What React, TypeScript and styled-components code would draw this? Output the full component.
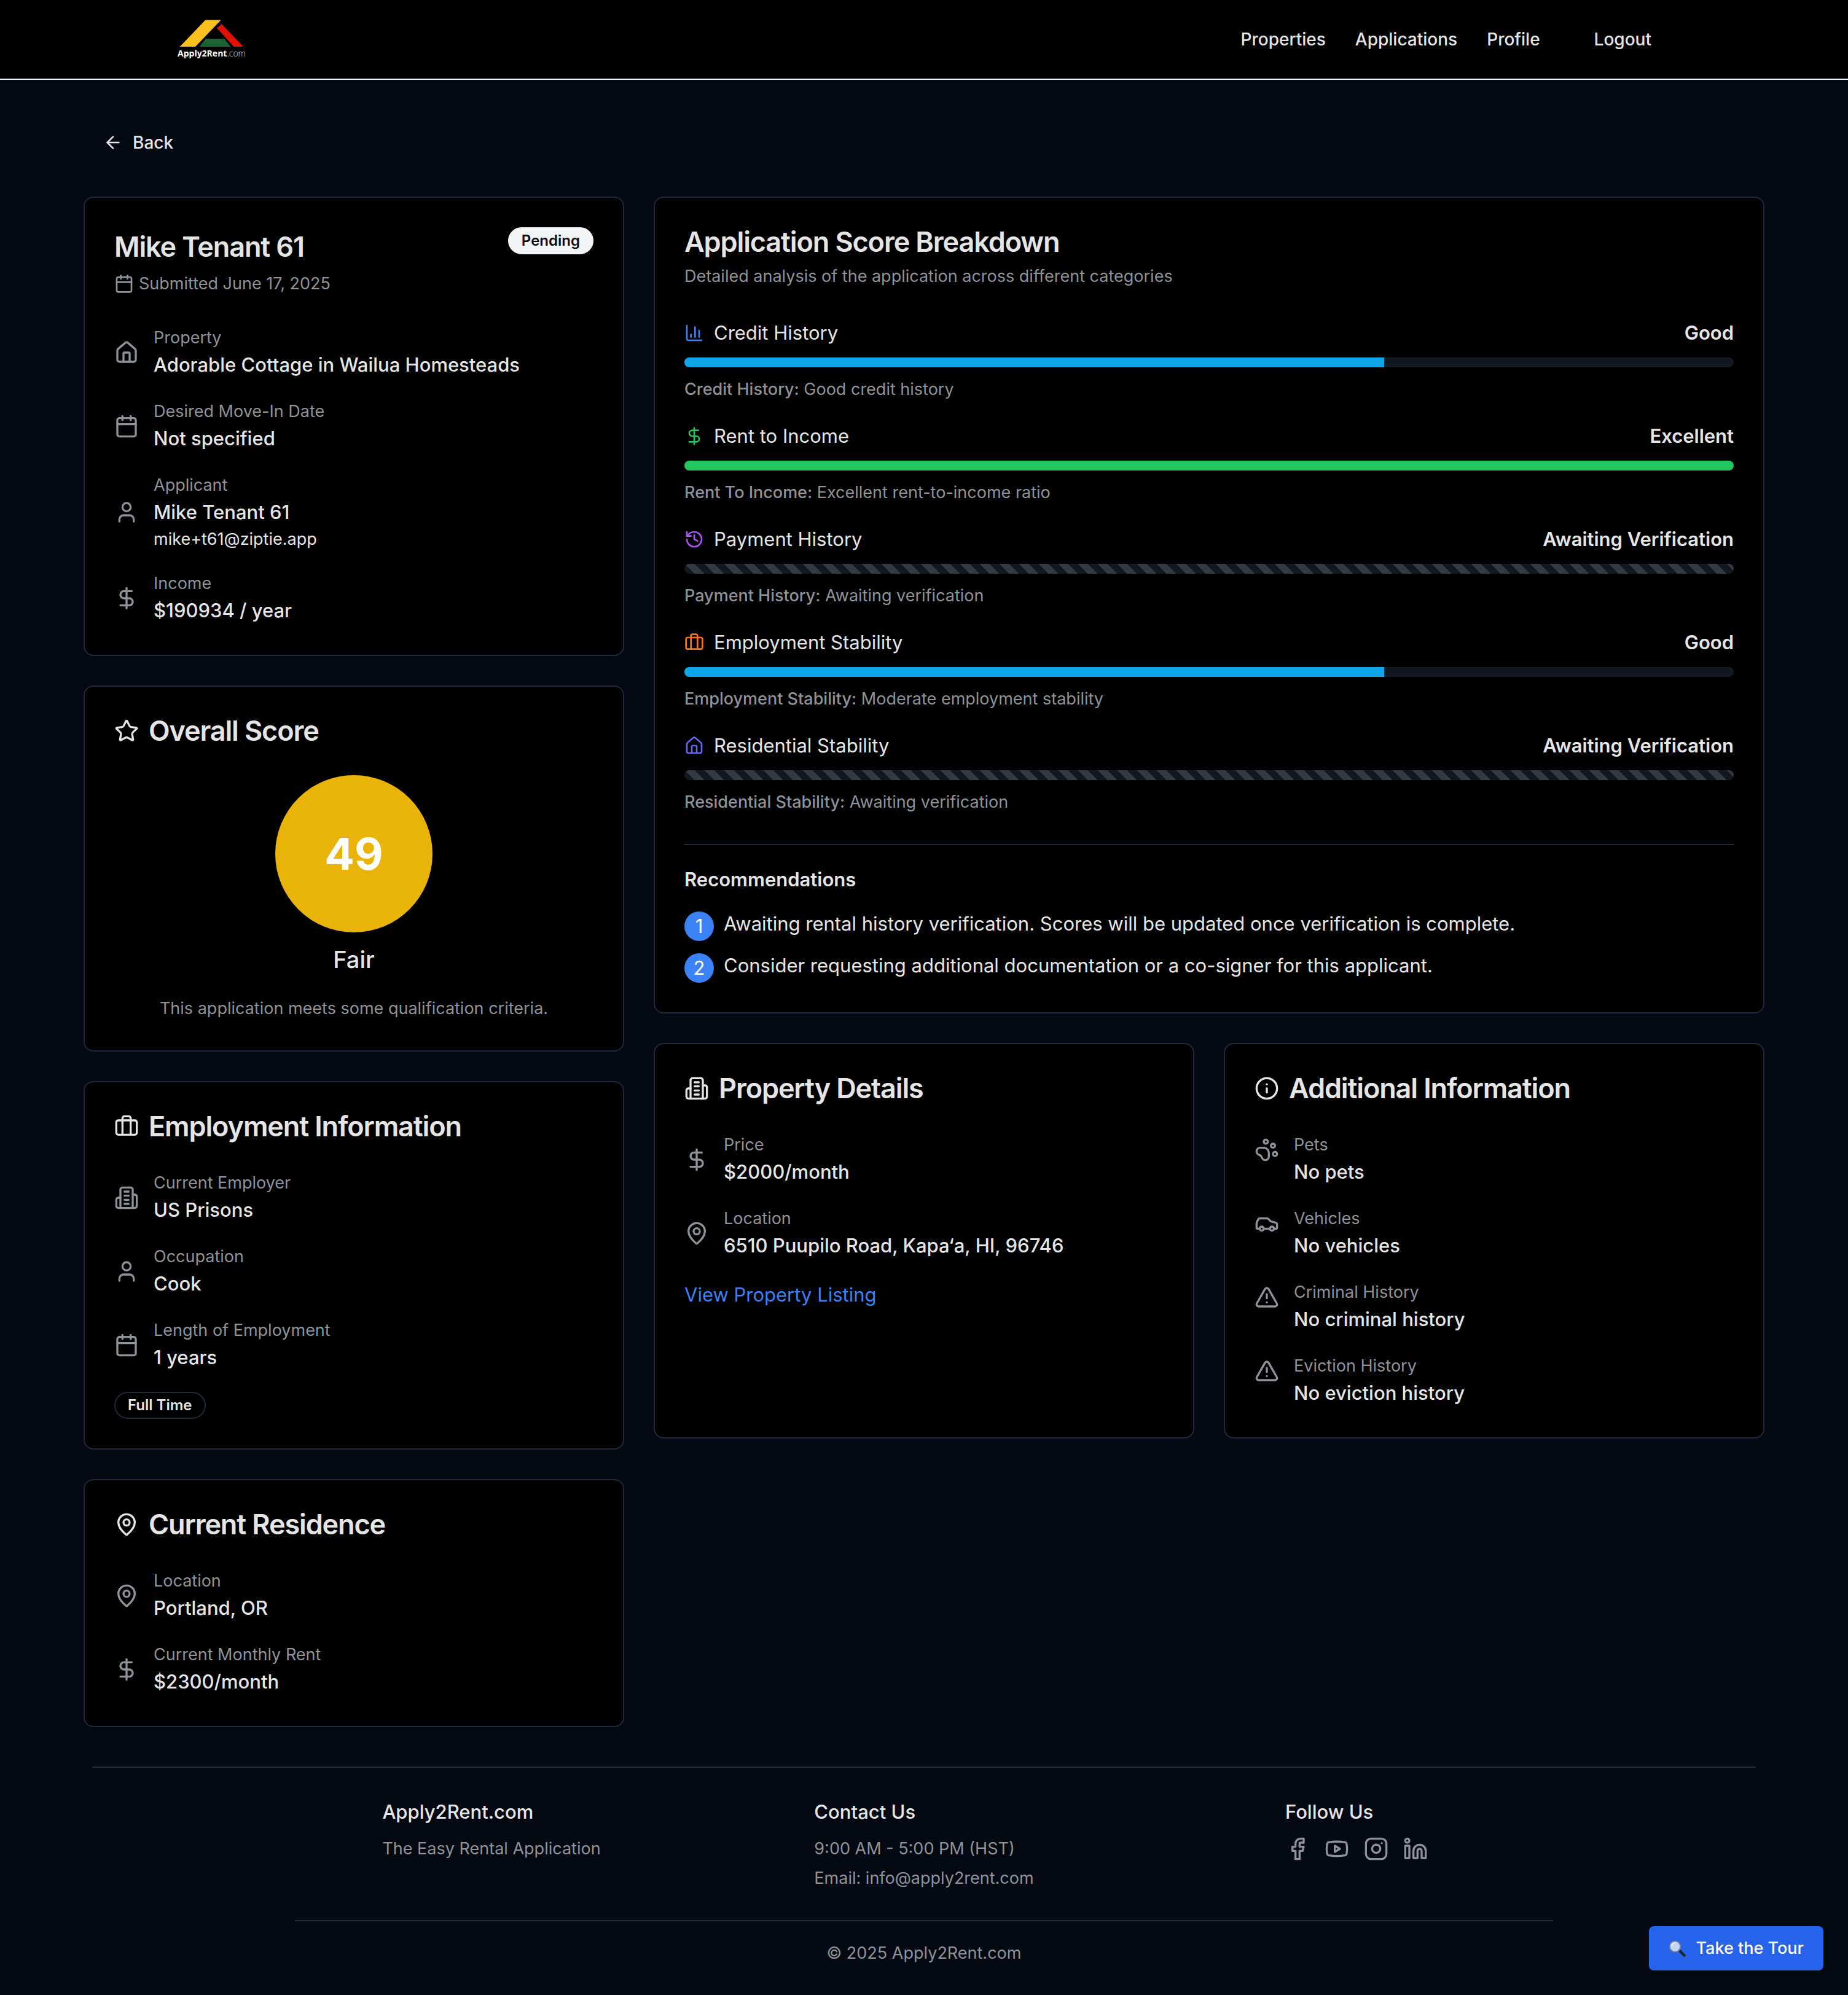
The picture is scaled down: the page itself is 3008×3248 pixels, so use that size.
import React from "react";
import styled, { createGlobalStyle } from "styled-components";
import {
  ArrowLeft,
  Briefcase,
  Calendar,
  Car,
  ChartColumn,
  DollarSign,
  Facebook,
  History,
  House,
  Info,
  Instagram,
  Linkedin,
  MapPin,
  PawPrint,
  Star,
  TriangleAlert,
  User,
  Youtube,
} from "lucide-react";

const color = {
  page: "#050a12",
  card: "#000000",
  border: "#1e293b",
  text: "#e5e5e5",
  muted: "#8f9299",
  track: "#111820",
  link: "#3b82f6",
};

const size = {
  title: "45px",
  rating: "38px",
  body: "31px",
  nav: "28px",
  small: "27px",
  badge: "24px",
};

const GlobalStyle = createGlobalStyle`
  *, *::before, *::after { box-sizing: border-box; }
  body {
    margin: 0;
    background: ${color.page};
    color: ${color.text};
    font-family: Inter, "Liberation Sans", sans-serif;
    font-size: ${size.body};
    line-height: 48px;
    -webkit-font-smoothing: antialiased;
  }
  h1, h2, h3, p, dl, dd, ol { margin: 0; padding: 0; }
  a { color: inherit; text-decoration: none; }
  button { font: inherit; color: inherit; background: none; border: 0; padding: 0; cursor: pointer; }
  svg { display: block; flex-shrink: 0; }
`;

type IconType = React.ComponentType<{ size?: number; color?: string; "aria-hidden"?: boolean }>;

/* Office block with four rows of windows */
function Building({ size: px = 24, color: stroke = "currentColor" }: { size?: number; color?: string }) {
  return (
    <svg
      width={px}
      height={px}
      viewBox="0 0 24 24"
      fill="none"
      stroke={stroke}
      strokeWidth="2"
      strokeLinecap="round"
      strokeLinejoin="round"
      aria-hidden
    >
      <path d="M6 22V4a2 2 0 0 1 2-2h8a2 2 0 0 1 2 2v18Z" />
      <path d="M6 12H4a2 2 0 0 0-2 2v6a2 2 0 0 0 2 2h2" />
      <path d="M18 9h2a2 2 0 0 1 2 2v9a2 2 0 0 1-2 2h-2" />
      <path d="M10 6h4" />
      <path d="M10 10h4" />
      <path d="M10 14h4" />
      <path d="M10 18h4" />
    </svg>
  );
}

/* Header */

const Header = styled.header`
  background: #000;
  border-bottom: 2px solid #f1f1f1;
`;

const HeaderInner = styled.div`
  display: flex;
  align-items: center;
  justify-content: space-between;
  height: 128px;
  max-width: 2560px;
  margin: 0 auto;
  padding: 0 64px;
`;

const Nav = styled.nav`
  display: flex;
  align-items: center;
  gap: 48px;
  font-size: ${size.nav};
  line-height: 40px;
  font-weight: 500;
`;

const LogoutButton = styled.button`
  margin-left: 8px;
  padding: 16px 32px;
  border-radius: 12px;
`;

function Logo() {
  return (
    <svg width="124" height="72" viewBox="288 28 124 72" role="img" aria-label="Apply2Rent.com">
      <path d="M334.4 32.5h25.3L318 76h-25.3z" fill="#fcc01e" />
      <path d="M361 39.3 396 76h-15.5L353 45.5z" fill="#e01000" />
      <path d="M335 62.9h30L375.3 76h-50.7z" fill="#1b6333" />
      <text x="289" y="92" fill="#fff" fontFamily="'Open Sans', sans-serif" fontSize="14" fontWeight="700">
        Apply2Rent<tspan fontWeight="300" fill="#ddd">.com</tspan>
      </text>
    </svg>
  );
}

/* Page frame */

const Main = styled.main`
  max-width: 2800px;
  margin: 0 auto;
  padding: 62px 32px 64px;
`;

const BackButton = styled.button`
  display: flex;
  align-items: center;
  gap: 16px;
  margin-bottom: 48px;
  padding: 20px 32px;
  font-size: ${size.nav};
  line-height: 40px;
  font-weight: 500;
`;

const Columns = styled.div`
  display: grid;
  grid-template-columns: repeat(3, minmax(0, 1fr));
  gap: 48px;
  align-items: start;
`;

const Stack = styled.div<{ $span?: number }>`
  display: flex;
  flex-direction: column;
  gap: 48px;
  grid-column: span ${(p) => p.$span ?? 1};
`;

const Pair = styled.div`
  display: grid;
  grid-template-columns: repeat(2, minmax(0, 1fr));
  gap: 48px;
`;

/* Cards */

const Card = styled.section`
  padding: 48px;
  background: ${color.card};
  border: 2px solid ${color.border};
  border-radius: 16px;
`;

const CardTitle = styled.h2`
  display: flex;
  align-items: center;
  gap: 16px;
  font-size: ${size.title};
  line-height: 48px;
  font-weight: 600;
  letter-spacing: -0.025em;
`;

const ApplicantName = styled.h1`
  font-size: ${size.title};
  line-height: 64px;
  font-weight: 600;
  letter-spacing: -0.025em;
`;

const CardTop = styled.div`
  display: flex;
  justify-content: space-between;
  align-items: flex-start;
`;

const Caption = styled.p<{ $gap: number }>`
  display: flex;
  align-items: center;
  gap: 8px;
  margin-top: ${(p) => p.$gap}px;
  font-size: ${size.small};
  line-height: 40px;
  color: ${color.muted};
`;

const Badge = styled.span<{ $solid?: boolean }>`
  display: inline-flex;
  padding: 4px 20px;
  border: 2px solid ${(p) => (p.$solid ? "#f3f4f6" : color.border)};
  border-radius: 22px;
  background: ${(p) => (p.$solid ? "#f3f4f6" : "transparent")};
  color: ${(p) => (p.$solid ? "#0a0a0a" : color.text)};
  font-size: ${size.badge};
  line-height: 32px;
  font-weight: 600;
`;

const BadgeRow = styled.div`
  display: flex;
  margin-top: 32px;
`;

/* Icon, label and value lines */

const FactList = styled.dl`
  display: flex;
  flex-direction: column;
  gap: 32px;
  margin-top: 48px;
`;

const FactRow = styled.div<{ $top?: boolean }>`
  display: flex;
  align-items: ${(p) => (p.$top ? "flex-start" : "center")};
  gap: 24px;

  > svg {
    color: ${color.muted};
    margin-top: ${(p) => (p.$top ? 8 : 0)}px;
  }
`;

const FactLabel = styled.dt`
  font-size: ${size.small};
  line-height: 40px;
  color: ${color.muted};
`;

const FactValue = styled.dd`
  font-weight: 500;
`;

const FactNote = styled.dd`
  font-size: ${size.small};
  line-height: 40px;
`;

type Fact = { icon: IconType; label: string; value: string; note?: string };

function Facts({ items, top }: { items: Fact[]; top?: boolean }) {
  return (
    <FactList>
      {items.map(({ icon: Icon, label, value, note }) => (
        <FactRow key={label} $top={top}>
          <Icon size={40} aria-hidden />
          <div>
            <FactLabel>{label}</FactLabel>
            <FactValue>{value}</FactValue>
            {note && <FactNote>{note}</FactNote>}
          </div>
        </FactRow>
      ))}
    </FactList>
  );
}

/* Overall score */

const ScoreBody = styled.div`
  display: flex;
  flex-direction: column;
  align-items: center;
  margin-top: 48px;
  text-align: center;
`;

const ScoreCircle = styled.div`
  display: grid;
  place-items: center;
  width: 256px;
  height: 256px;
  border-radius: 50%;
  background: #eab308;
  color: #fff;
  font-size: 72px;
  line-height: 80px;
  font-weight: 700;
`;

const ScoreRating = styled.p`
  margin-top: 16px;
  font-size: ${size.rating};
  line-height: 56px;
  font-weight: 500;
`;

/* Score breakdown */

const Scores = styled.div`
  display: flex;
  flex-direction: column;
  gap: 32px;
  margin-top: 48px;
`;

const ScoreRow = styled.div`
  display: flex;
  flex-direction: column;
  gap: 16px;
`;

const ScoreHead = styled.div`
  display: flex;
  justify-content: space-between;
  align-items: center;
`;

const ScoreName = styled.h3`
  display: flex;
  align-items: center;
  gap: 16px;
  font-size: ${size.body};
  font-weight: 400;
`;

const Rating = styled.span`
  font-weight: 600;
`;

const Track = styled.div<{ $pending: boolean }>`
  height: 16px;
  overflow: hidden;
  border-radius: 8px;
  background-color: ${color.track};
  background-size: 32px 32px;
  background-image: ${(p) =>
    p.$pending
      ? "linear-gradient(45deg, rgba(255,255,255,.15) 25%, transparent 25%, transparent 50%, rgba(255,255,255,.15) 50%, rgba(255,255,255,.15) 75%, transparent 75%)"
      : "none"};
`;

const Fill = styled.div<{ $color: string }>`
  height: 100%;
  background: ${(p) => p.$color};
`;

const ScoreNote = styled.p`
  font-size: ${size.small};
  line-height: 40px;
  color: ${color.muted};

  strong { font-weight: 500; }
`;

type Score = {
  icon: IconType;
  tint: string;
  name: string;
  rating: string;
  percent?: number;
  fill?: string;
  key: string;
  note: string;
};

const scores: Score[] = [
  { icon: ChartColumn, tint: "#3b82f6", name: "Credit History", rating: "Good", percent: 66.66, fill: "#0ea5e9", key: "Credit History:", note: "Good credit history" },
  { icon: DollarSign, tint: "#22c55e", name: "Rent to Income", rating: "Excellent", percent: 100, fill: "#22c55e", key: "Rent To Income:", note: "Excellent rent-to-income ratio" },
  { icon: History, tint: "#a855f7", name: "Payment History", rating: "Awaiting Verification", key: "Payment History:", note: "Awaiting verification" },
  { icon: Briefcase, tint: "#f97316", name: "Employment Stability", rating: "Good", percent: 66.66, fill: "#0ea5e9", key: "Employment Stability:", note: "Moderate employment stability" },
  { icon: House, tint: "#6366f1", name: "Residential Stability", rating: "Awaiting Verification", key: "Residential Stability:", note: "Awaiting verification" },
];

const Recommendations = styled.div`
  margin-top: 48px;
  padding-top: 32px;
  border-top: 2px solid ${color.border};
`;

const RecommendationsTitle = styled.h3`
  font-size: ${size.body};
  line-height: 48px;
  font-weight: 600;
`;

const RecommendationList = styled.ol`
  display: flex;
  flex-direction: column;
  gap: 16px;
  margin-top: 24px;
  list-style: none;

  li {
    display: flex;
    align-items: flex-start;
    gap: 16px;
  }
`;

const StepNumber = styled.span`
  display: grid;
  place-items: center;
  flex-shrink: 0;
  width: 48px;
  height: 48px;
  margin-top: 4px;
  border-radius: 50%;
  background: #3b82f6;
  color: #fff;
`;

const ListingLink = styled.a`
  display: inline-block;
  margin-top: 32px;
  color: ${color.link};
`;

/* Footer */

const FooterBar = styled.footer`
  width: 90%;
  margin: 0 auto;
  border-top: 2px solid ${color.border};
  padding: 48px 0;
  font-size: ${size.small};
  line-height: 40px;
  color: ${color.muted};
`;

const FooterInner = styled.div`
  max-width: 2048px;
  margin: 0 auto;
`;

const FooterColumns = styled.div`
  display: grid;
  grid-template-columns: repeat(3, minmax(0, 1fr));
  gap: 64px;
  justify-items: center;
`;

const FooterColumn = styled.div`
  display: flex;
  flex-direction: column;
  gap: 8px;
`;

const FooterHeading = styled.h3`
  margin-bottom: 8px;
  font-size: ${size.body};
  line-height: 48px;
  font-weight: 500;
  color: ${color.text};
`;

const Social = styled.div`
  display: flex;
  gap: 24px;
`;

const Copyright = styled.p`
  margin-top: 48px;
  padding-top: 32px;
  border-top: 2px solid ${color.border};
  text-align: center;
`;

const TourButton = styled.button`
  position: fixed;
  right: 40px;
  bottom: 40px;
  display: flex;
  align-items: center;
  gap: 16px;
  height: 72px;
  padding: 0 32px;
  border-radius: 8px;
  background: #2563eb;
  color: #fff;
  font-size: ${size.small};
  line-height: 40px;
  font-weight: 500;
`;

function Magnifier() {
  return (
    <svg width="28" height="28" viewBox="0 0 28 28" aria-hidden>
      <path d="M15.5 16.5l3 3" stroke="#8b8f97" strokeWidth="3" />
      <path d="M18.5 18.5l7 7" stroke="#20242c" strokeWidth="4.5" strokeLinecap="round" />
      <circle cx="10.5" cy="11" r="8.8" fill="#c3d3f5" stroke="#6f7f9e" strokeWidth="2" />
      <path d="M5 10a6 6 0 0 1 5-5" stroke="#eef3ff" strokeWidth="1.5" fill="none" strokeLinecap="round" />
    </svg>
  );
}

const socials: { icon: IconType; name: string }[] = [
  { icon: Facebook, name: "Facebook" },
  { icon: Youtube, name: "YouTube" },
  { icon: Instagram, name: "Instagram" },
  { icon: Linkedin, name: "LinkedIn" },
];

export default function App() {
  return (
    <>
      <GlobalStyle />
      <Header>
        <HeaderInner>
          <a href="#home"><Logo /></a>
          <Nav>
            <a href="#properties">Properties</a>
            <a href="#applications">Applications</a>
            <a href="#profile">Profile</a>
            <LogoutButton type="button">Logout</LogoutButton>
          </Nav>
        </HeaderInner>
      </Header>

      <Main>
        <BackButton type="button">
          <ArrowLeft size={32} aria-hidden />
          Back
        </BackButton>

        <Columns>
          <Stack>
            <Card>
              <CardTop>
                <ApplicantName>Mike Tenant 61</ApplicantName>
                <Badge $solid>Pending</Badge>
              </CardTop>
              <Caption $gap={8}>
                <Calendar size={32} aria-hidden />
                Submitted June 17, 2025
              </Caption>
              <Facts
                items={[
                  { icon: House, label: "Property", value: "Adorable Cottage in Wailua Homesteads" },
                  { icon: Calendar, label: "Desired Move-In Date", value: "Not specified" },
                  { icon: User, label: "Applicant", value: "Mike Tenant 61", note: "mike+t61@ziptie.app" },
                  { icon: DollarSign, label: "Income", value: "$190934 / year" },
                ]}
              />
            </Card>

            <Card>
              <CardTitle><Star size={40} aria-hidden />Overall Score</CardTitle>
              <ScoreBody>
                <ScoreCircle>49</ScoreCircle>
                <ScoreRating>Fair</ScoreRating>
                <Caption $gap={32}>This application meets some qualification criteria.</Caption>
              </ScoreBody>
            </Card>

            <Card>
              <CardTitle><Briefcase size={40} aria-hidden />Employment Information</CardTitle>
              <Facts
                items={[
                  { icon: Building, label: "Current Employer", value: "US Prisons" },
                  { icon: User, label: "Occupation", value: "Cook" },
                  { icon: Calendar, label: "Length of Employment", value: "1 years" },
                ]}
              />
              <BadgeRow><Badge>Full Time</Badge></BadgeRow>
            </Card>

            <Card>
              <CardTitle><MapPin size={40} aria-hidden />Current Residence</CardTitle>
              <Facts
                items={[
                  { icon: MapPin, label: "Location", value: "Portland, OR" },
                  { icon: DollarSign, label: "Current Monthly Rent", value: "$2300/month" },
                ]}
              />
            </Card>
          </Stack>

          <Stack $span={2}>
            <Card>
              <CardTitle>Application Score Breakdown</CardTitle>
              <Caption $gap={12}>Detailed analysis of the application across different categories</Caption>
              <Scores>
                {scores.map(({ icon: Icon, ...s }) => (
                  <ScoreRow key={s.name}>
                    <ScoreHead>
                      <ScoreName><Icon size={32} color={s.tint} aria-hidden />{s.name}</ScoreName>
                      <Rating>{s.rating}</Rating>
                    </ScoreHead>
                    <Track $pending={s.percent === undefined}>
                      {s.percent !== undefined && s.fill && (
                        <Fill $color={s.fill} style={{ width: `${s.percent}%` }} />
                      )}
                    </Track>
                    <ScoreNote><strong>{s.key}</strong> {s.note}</ScoreNote>
                  </ScoreRow>
                ))}
              </Scores>
              <Recommendations>
                <RecommendationsTitle>Recommendations</RecommendationsTitle>
                <RecommendationList>
                  <li>
                    <StepNumber>1</StepNumber>
                    Awaiting rental history verification. Scores will be updated once verification is complete.
                  </li>
                  <li>
                    <StepNumber>2</StepNumber>
                    Consider requesting additional documentation or a co-signer for this applicant.
                  </li>
                </RecommendationList>
              </Recommendations>
            </Card>

            <Pair>
              <Card>
                <CardTitle><Building size={40} />Property Details</CardTitle>
                <Facts
                  items={[
                    { icon: DollarSign, label: "Price", value: "$2000/month" },
                    { icon: MapPin, label: "Location", value: "6510 Puupilo Road, Kapa‘a, HI, 96746" },
                  ]}
                />
                <ListingLink href="#listing">View Property Listing</ListingLink>
              </Card>
              <Card>
                <CardTitle><Info size={40} aria-hidden />Additional Information</CardTitle>
                <Facts
                  top
                  items={[
                    { icon: PawPrint, label: "Pets", value: "No pets" },
                    { icon: Car, label: "Vehicles", value: "No vehicles" },
                    { icon: TriangleAlert, label: "Criminal History", value: "No criminal history" },
                    { icon: TriangleAlert, label: "Eviction History", value: "No eviction history" },
                  ]}
                />
              </Card>
            </Pair>
          </Stack>
        </Columns>
      </Main>

      <FooterBar>
        <FooterInner>
          <FooterColumns>
            <FooterColumn>
              <FooterHeading>Apply2Rent.com</FooterHeading>
              <p>The Easy Rental Application</p>
            </FooterColumn>
            <FooterColumn>
              <FooterHeading>Contact Us</FooterHeading>
              <p>9:00 AM - 5:00 PM (HST)</p>
              <p>Email: info@apply2rent.com</p>
            </FooterColumn>
            <FooterColumn>
              <FooterHeading>Follow Us</FooterHeading>
              <Social>
                {socials.map(({ icon: Icon, name }) => (
                  <a key={name} href={`#${name.toLowerCase()}`} aria-label={name}>
                    <Icon size={40} aria-hidden />
                  </a>
                ))}
              </Social>
            </FooterColumn>
          </FooterColumns>
          <Copyright>© 2025 Apply2Rent.com</Copyright>
        </FooterInner>
      </FooterBar>

      <TourButton type="button">
        <Magnifier />
        Take the Tour
      </TourButton>
    </>
  );
}
